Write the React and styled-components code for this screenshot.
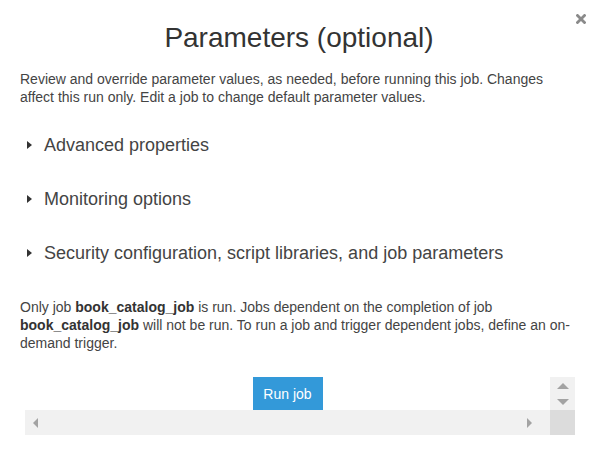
import React from "react";
import styled, { createGlobalStyle } from "styled-components";

const Global = createGlobalStyle`
  html, body { margin: 0; padding: 0; background: #fff; }
  body { font-family: "Liberation Sans", Arial, sans-serif; color: #444; }
`;

const Modal = styled.div`
  position: relative;
  width: 598px;
  height: 450px;
  box-sizing: border-box;
  padding: 22px 20px 0;
`;

const Close = styled.button`
  position: absolute;
  top: 13px;
  right: 12px;
  width: 11px;
  height: 11px;
  padding: 0;
  border: 0;
  background: none;
  display: flex;
  align-items: center;
  justify-content: center;
  cursor: pointer;
`;

const Title = styled.h2`
  margin: 0;
  font-size: 28px;
  line-height: 32px;
  font-weight: normal;
  text-align: center;
  color: #333;
`;

const Text = styled.p`
  margin: ${(p) => p.$top}px 0 0;
  font-size: 14px;
  line-height: 18px;
  color: #444;
  b { color: #333; font-weight: bold; }
`;

const Sections = styled.div`
  margin-top: 12px;
  display: flex;
  flex-direction: column;
`;

const Section = styled.div`
  height: 54px;
  display: flex;
  align-items: center;
  gap: 12px;
  padding-left: 7px;
  font-size: 18px;
  line-height: 21px;
  color: #444;
  cursor: pointer;
`;

const Caret = styled.span`
  flex: none;
  width: 0;
  height: 0;
  border-top: 4px solid transparent;
  border-bottom: 4px solid transparent;
  border-left: 5px solid #333;
`;

const ScrollBox = styled.div`
  margin: 25px 5px 0;
  width: 550px;
  display: grid;
  grid-template-columns: 525px 25px;
  grid-template-rows: 33px 25px;
`;

const Content = styled.div`
  display: flex;
  justify-content: center;
`;

const RunButton = styled.button`
  width: 70px;
  height: 33px;
  border: 0;
  padding: 0;
  background: #3399d9;
  color: #fff;
  font-family: "Liberation Sans", Arial, sans-serif;
  font-size: 14px;
  cursor: pointer;
`;

const VBar = styled.div`
  background: #f1f1f1;
  display: flex;
  flex-direction: column;
  align-items: center;
  padding-top: 6px;
  gap: 10px;
`;

const HBar = styled.div`
  background: #f1f1f1;
  display: flex;
  align-items: center;
  justify-content: space-between;
  padding: 0 18px 0 8px;
`;

const Corner = styled.div`
  background: #dcdcdc;
`;

const arrowBorders = {
  up: "border-left:6px solid transparent;border-right:6px solid transparent;border-bottom:6px solid #a3a3a3;",
  down: "border-left:6px solid transparent;border-right:6px solid transparent;border-top:6px solid #a3a3a3;",
  left: "border-top:5px solid transparent;border-bottom:5px solid transparent;border-right:5px solid #a3a3a3;",
  right: "border-top:5px solid transparent;border-bottom:5px solid transparent;border-left:5px solid #a3a3a3;",
};

const Arrow = styled.span`
  flex: none;
  width: 0;
  height: 0;
  ${(p) => arrowBorders[p.$dir]}
`;

const sections = [
  "Advanced properties",
  "Monitoring options",
  "Security configuration, script libraries, and job parameters",
];

export default function App() {
  return (
    <>
      <Global />
      <Modal>
        <Close aria-label="Close">
          <svg width="10" height="10" viewBox="0 0 10 10">
            <path d="M1.5 1.5 L8.5 8.5 M8.5 1.5 L1.5 8.5" stroke="#8a8a8a" strokeWidth="2.8" strokeLinecap="square" />
          </svg>
        </Close>
        <Title>Parameters (optional)</Title>
        <Text $top={16}>
          Review and override parameter values, as needed, before running this job. Changes affect this run only. Edit a job to change default parameter values.
        </Text>
        <Sections>
          {sections.map((s) => (
            <Section key={s}>
              <Caret />
              {s}
            </Section>
          ))}
        </Sections>
        <Text $top={18}>
          Only job <b>book_catalog_job</b> is run. Jobs dependent on the completion of job <b>book_catalog_job</b> will not be run. To run a job and trigger dependent jobs, define an on-demand trigger.
        </Text>
        <ScrollBox>
          <Content>
            <RunButton>Run job</RunButton>
          </Content>
          <VBar>
            <Arrow $dir="up" />
            <Arrow $dir="down" />
          </VBar>
          <HBar>
            <Arrow $dir="left" />
            <Arrow $dir="right" />
          </HBar>
          <Corner />
        </ScrollBox>
      </Modal>
    </>
  );
}
